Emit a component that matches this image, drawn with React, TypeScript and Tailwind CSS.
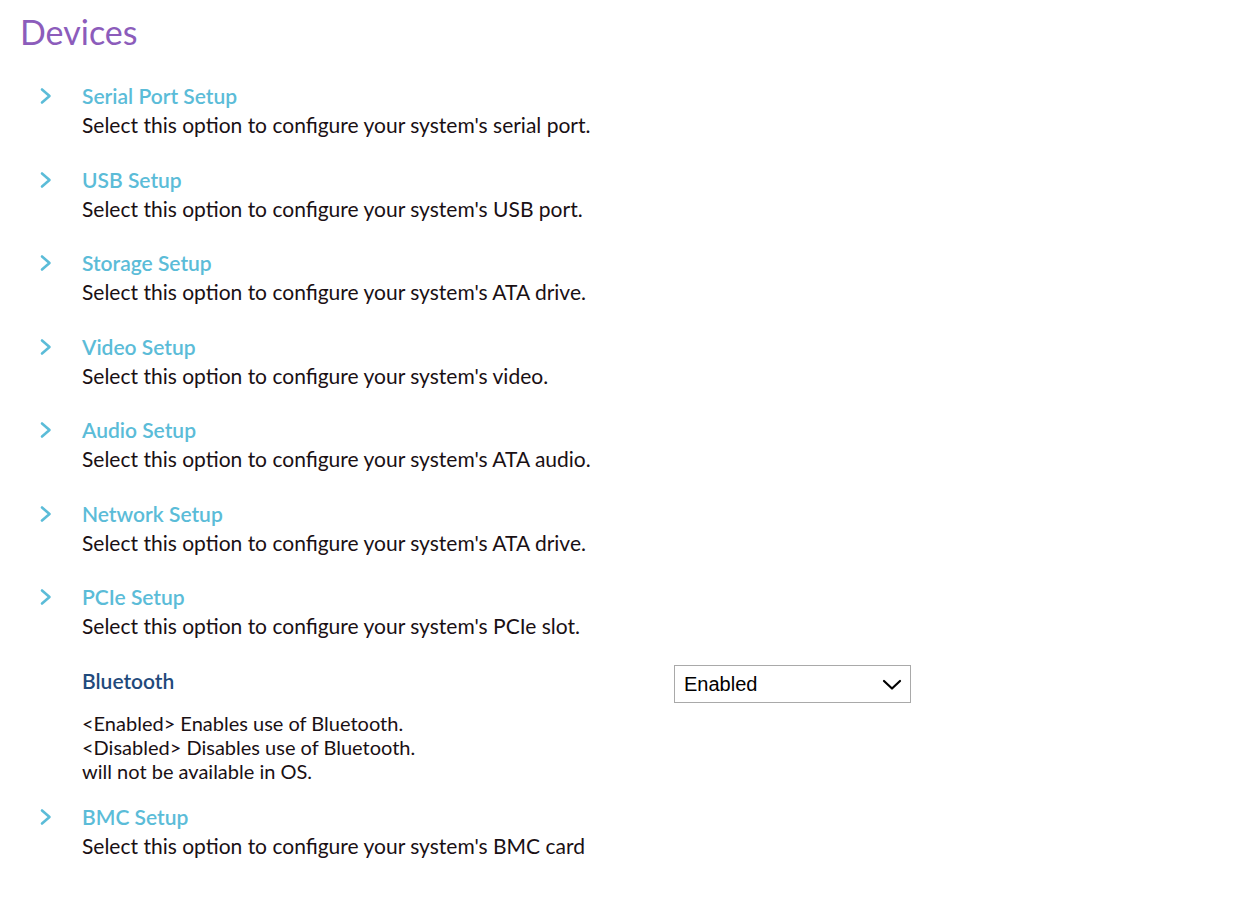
type Item = { title: string; desc: string }

const top: Item[] = [
  { title: 'Serial Port Setup', desc: "Select this option to configure your system's serial port." },
  { title: 'USB Setup', desc: "Select this option to configure your system's USB port." },
  { title: 'Storage Setup', desc: "Select this option to configure your system's ATA drive." },
  { title: 'Video Setup', desc: "Select this option to configure your system's video." },
  { title: 'Audio Setup', desc: "Select this option to configure your system's ATA audio." },
  { title: 'Network Setup', desc: "Select this option to configure your system's ATA drive." },
  { title: 'PCIe Setup', desc: "Select this option to configure your system's PCIe slot." },
]

function Chevron() {
  return (
    <svg width="14" height="18" viewBox="0 0 14 18" className="shrink-0 mt-[6px]">
      <path d="M3 2.5 L10.5 9 L3 15.5" fill="none" stroke="#5bbcd8" strokeWidth="2.6" strokeLinecap="round" strokeLinejoin="round" />
    </svg>
  )
}

function Row({ item }: { item: Item }) {
  return (
    <div className="flex h-[83.5px] pl-[39px]">
      <Chevron />
      <div className="pl-[29px]">
        <div className="text-[21px] leading-[29px] font-semibold text-[#5bbcd8]">{item.title}</div>
        <div className="text-[21px] leading-[30px] text-[#1a1014]">{item.desc}</div>
      </div>
    </div>
  )
}

export default function App() {
  return (
    <div className="min-h-screen bg-white font-['Lato',sans-serif]">
      <h1 className="pl-[20px] pt-[11px] text-[34px] leading-[42px] text-[#8c5cbb]">Devices</h1>
      <div className="mt-[28px]">
        {top.map(i => <Row key={i.title} item={i} />)}
        <div className="pl-[82px] pr-[341px] -mt-[1px] h-[137px]">
          <div className="flex items-start justify-between">
            <div className="text-[21px] leading-[30px] font-semibold text-[#1f4a7c] mt-[1px]">Bluetooth</div>
            <div className="relative w-[237px] h-[38px] border border-[#a9a9a9] bg-white">
              <span className="absolute left-[9px] top-[6px] font-['Liberation_Sans',Arial,sans-serif] text-[20px] leading-[24px] text-black">Enabled</span>
              <svg width="20" height="12" viewBox="0 0 20 12" className="absolute right-[8px] top-[13px]">
                <path d="M2 2 L10 9.5 L18 2" fill="none" stroke="#000" strokeWidth="2.2" strokeLinecap="round" strokeLinejoin="round" />
              </svg>
            </div>
          </div>
          <div className="mt-[8px] text-[20px] leading-[24px] text-[#1a1014]">
            <div>&lt;Enabled&gt; Enables use of Bluetooth.</div>
            <div>&lt;Disabled&gt; Disables use of Bluetooth.</div>
            <div>will not be available in OS.</div>
          </div>
        </div>
        <Row item={{ title: 'BMC Setup', desc: "Select this option to configure your system's BMC card" }} />
      </div>
    </div>
  )
}
